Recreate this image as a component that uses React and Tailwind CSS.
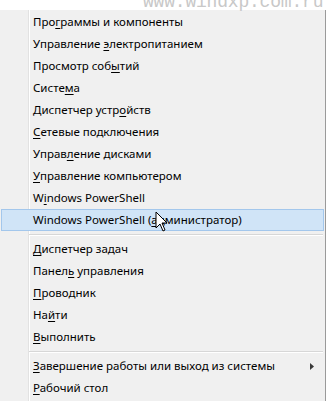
import React from "react";

const groups = [
  [
    ["Про", "г", "раммы и компоненты"],
    ["Управление ", "э", "лектропитанием"],
    ["Просмотр соб", "ы", "тий"],
    ["Систе", "м", "а"],
    ["Диспетчер устр", "о", "йств"],
    ["", "С", "етевые подключения"],
    ["Управ", "л", "ение дисками"],
    ["", "У", "правление компьютером"],
    ["W", "i", "ndows PowerShell"],
    ["Windows PowerShell (", "а", "дминистратор)", true],
  ],
  [
    ["", "Д", "испетчер задач"],
    ["Панел", "ь", " управления"],
    ["", "П", "роводник"],
    ["На", "й", "ти"],
    ["", "В", "ыполнить"],
  ],
  [
    ["", "З", "авершение работы или выход из системы", false, true],
    ["", "Р", "абочий стол"],
  ],
];

function Item({ item }) {
  const [a, key, b, active, sub] = item;
  const label = (
    <span className="whitespace-pre">
      {a}
      <span className="underline underline-offset-[2px] decoration-[1px]">{key}</span>
      {b}
    </span>
  );
  if (active) {
    return (
      <div className="relative z-10 mx-[1px] h-[22px] flex items-center pl-[31px] border border-[#a3c7ec] bg-[#d0e4f7]">
        {label}
      </div>
    );
  }
  return (
    <div className="relative h-[22px] flex items-center pl-[33px] pr-[11px]">
      {label}
      {sub && (
        <svg className="ml-auto" width="4" height="7" viewBox="0 0 4 7">
          <path d="M0 0 L4 3.5 L0 7 Z" fill="#3a3a3a" />
        </svg>
      )}
    </div>
  );
}

function Separator() {
  return (
    <div className="relative h-[7px] flex flex-col justify-center pl-[29px] pr-[2px]">
      <div className="h-px bg-[#d7d7d7]" />
      <div className="h-px bg-white" />
    </div>
  );
}

export default function App() {
  return (
    <div
      className="relative w-[327px] h-[401px] bg-white overflow-hidden text-[11.5px] text-black"
      style={{ fontFamily: '"Noto Sans", "Open Sans", sans-serif' }}
    >
      <div className="relative mt-[10px] w-[326px] h-[400px] bg-[#f0f0f0] border-r border-[#9a9a9a] pt-[1px]">
        <div className="absolute left-[28px] top-0 bottom-0 w-px bg-[#e2e2e2]" />
        <div className="absolute left-[29px] top-0 bottom-0 w-px bg-white" />
        {groups.map((g, gi) => (
          <React.Fragment key={gi}>
            {gi > 0 && <Separator />}
            {g.map((it, i) => (
              <Item key={i} item={it} />
            ))}
          </React.Fragment>
        ))}
      </div>

      <div
        className="absolute left-[143px] top-[-7px] text-[18px] leading-none text-[#c8c8c8] tracking-[-0.2px]"
        style={{ fontFamily: '"Liberation Mono", monospace' }}
      >
        www.windxp.com.ru
      </div>

      <svg className="absolute left-[155px] top-[211px] z-20" width="13" height="21" viewBox="0 0 13 21">
        <path
          d="M1 1 L1 17 L5 13 L8 20 L10 19 L7 12 L12 12 Z"
          fill="#fff"
          stroke="#000"
          strokeWidth="1"
          strokeLinejoin="round"
        />
      </svg>
    </div>
  );
}
